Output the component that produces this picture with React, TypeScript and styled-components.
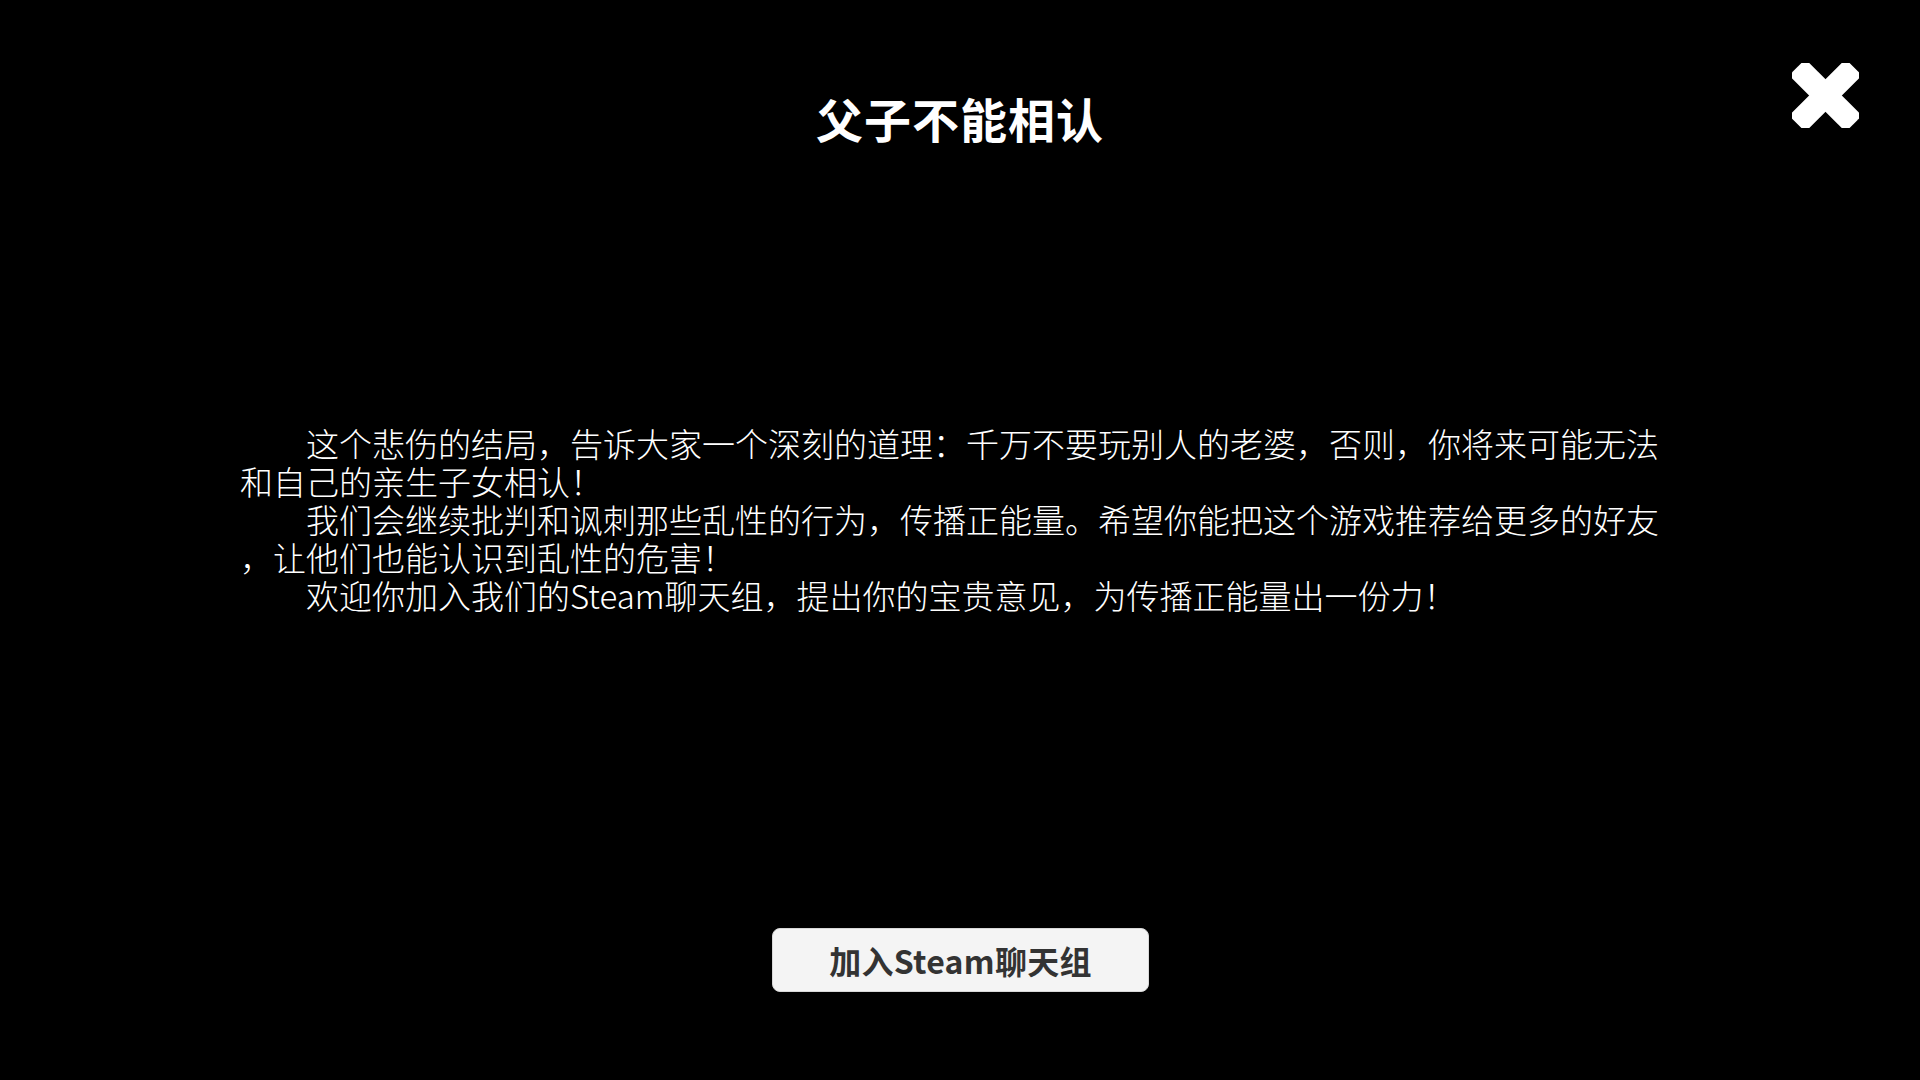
import React from "react";
import styled, { createGlobalStyle } from "styled-components";

const GlobalStyle = createGlobalStyle`
  html, body {
    margin: 0;
    padding: 0;
    background: #000;
  }
  body {
    font-family: "Noto Sans CJK SC", "Noto Sans", sans-serif;
  }
`;

const Screen = styled.div`
  width: 100vw;
  height: 100vh;
  background: #000;
  display: flex;
  flex-direction: column;
  align-items: stretch;
  overflow: hidden;
`;

const Header = styled.header`
  display: grid;
  grid-template-columns: 1fr auto 1fr;
  align-items: start;
  padding-top: 63px;
`;

const Title = styled.h1`
  grid-column: 2;
  margin: 26px 0 0;
  font-size: 47px;
  line-height: 58px;
  font-weight: 700;
  color: #fff;
  letter-spacing: 1px;
`;

const CloseButton = styled.button`
  grid-column: 3;
  justify-self: end;
  margin-right: 61px;
  width: 67px;
  height: 65px;
  padding: 0;
  border: none;
  background: transparent;
  cursor: pointer;
  display: flex;
  align-items: center;
  justify-content: center;
`;

const Message = styled.div`
  margin: 277px 0 0 240px;
  width: 1440px;
  color: #fff;
  font-size: 33px;
  line-height: 38px;
  font-weight: 300;
`;

const Line = styled.div<{ $indent?: boolean }>`
  white-space: nowrap;
  text-indent: ${(p) => (p.$indent ? "66px" : "0")};
`;

const Footer = styled.div`
  display: flex;
  justify-content: center;
  margin-top: 314px;
`;

const JoinButton = styled.button`
  width: 377px;
  height: 64px;
  margin-left: 1px;
  border: 1px solid #d8d8d8;
  border-radius: 8px;
  background: #f4f4f4;
  color: #333;
  font-family: "Noto Sans CJK SC", "Noto Sans", sans-serif;
  font-size: 32px;
  font-weight: 700;
  letter-spacing: 0.3px;
  display: flex;
  align-items: center;
  justify-content: center;
  cursor: pointer;
  padding: 0;
`;

const CloseIcon = () => (
  <svg width="67" height="65" viewBox="0 0 67 65">
    <g transform="translate(33.5 32.5) rotate(45)">
      <rect x="-40" y="-11.5" width="80" height="23" rx="5" fill="#fff" />
      <rect x="-11.5" y="-40" width="23" height="80" rx="5" fill="#fff" />
    </g>
  </svg>
);

export default function App() {
  return (
    <>
      <GlobalStyle />
      <Screen>
        <Header>
          <Title>父子不能相认</Title>
          <CloseButton aria-label="关闭">
            <CloseIcon />
          </CloseButton>
        </Header>
        <Message>
          <Line $indent>这个悲伤的结局，告诉大家一个深刻的道理：千万不要玩别人的老婆，否则，你将来可能无法</Line>
          <Line>和自己的亲生子女相认！</Line>
          <Line $indent>我们会继续批判和讽刺那些乱性的行为，传播正能量。希望你能把这个游戏推荐给更多的好友</Line>
          <Line>，让他们也能认识到乱性的危害！</Line>
          <Line $indent>欢迎你加入我们的Steam聊天组，提出你的宝贵意见，为传播正能量出一份力！</Line>
        </Message>
        <Footer>
          <JoinButton>加入Steam聊天组</JoinButton>
        </Footer>
      </Screen>
    </>
  );
}
